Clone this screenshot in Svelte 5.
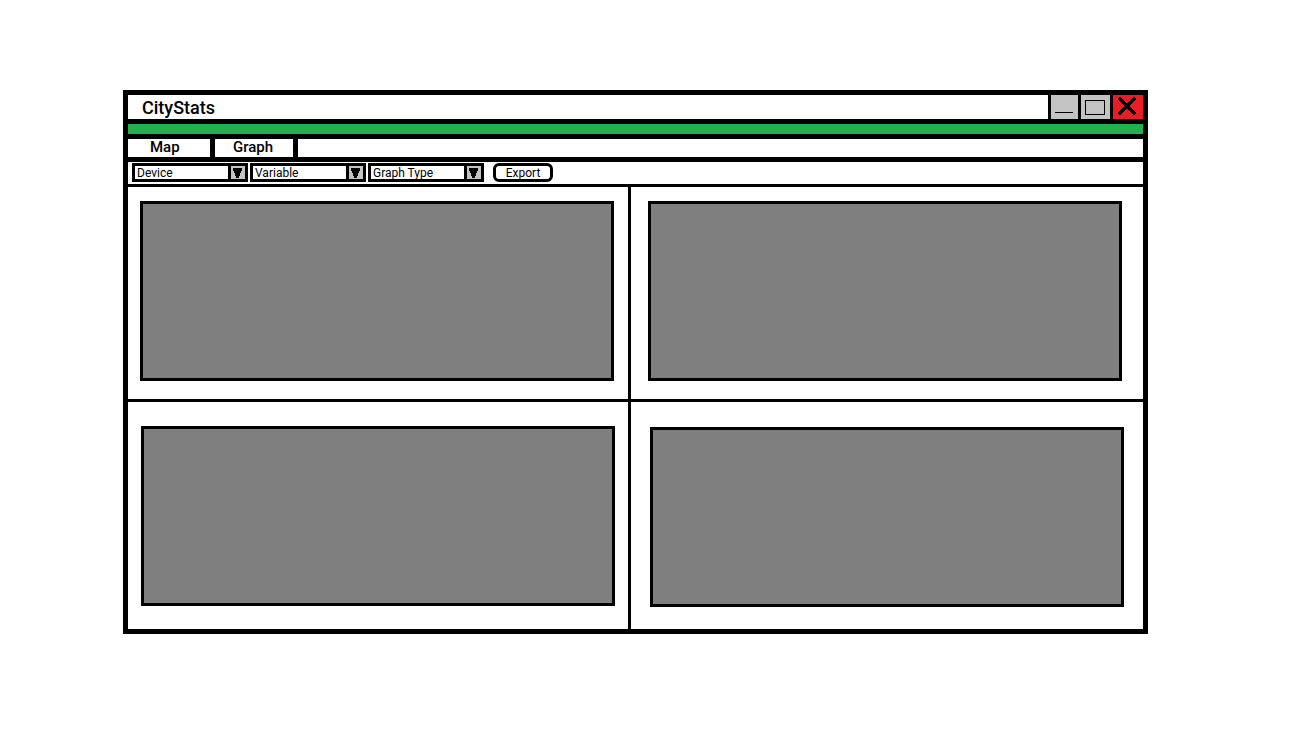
<script>
  const filters = [
    { id: 'device', label: 'Device' },
    { id: 'variable', label: 'Variable' },
    { id: 'graph-type', label: 'Graph Type' }
  ];
  const charts = ['one', 'two', 'three', 'four'];
  let tab = $state('Graph');
</script>

<div class="page">
  <main class="window">
    <header class="titlebar">
      <h1>CityStats</h1>
      <button class="control minimise" aria-label="Minimise">
        <svg width="18" height="18" viewBox="0 0 18 18" shape-rendering="crispEdges"><path d="M0 14h18v1H0z" /></svg>
      </button>
      <button class="control maximise" aria-label="Maximise">
        <svg width="20" height="15" viewBox="0 0 20 15" shape-rendering="crispEdges"><path d="M0 0h20v15H0zM1 1v13h18V1z" fill-rule="evenodd" /></svg>
      </button>
      <button class="control close" aria-label="Close">
        <svg width="18" height="18" viewBox="0 0 18 18" shape-rendering="crispEdges"><path d="M2 2L16 16M16 2L2 16" stroke="#000" stroke-width="3" stroke-linecap="square" /></svg>
      </button>
    </header>
    <div class="accent"></div>
    <nav class="tabs">
      <button class="tab map" onclick={() => (tab = 'Map')} aria-pressed={tab === 'Map'}>Map</button>
      <button class="tab graph" onclick={() => (tab = 'Graph')} aria-pressed={tab === 'Graph'}>Graph</button>
    </nav>
    <div class="toolbar">
      {#each filters as f (f.id)}
        <div class="combo">
          <select id={f.id} aria-label={f.label}>
            <option>{f.label}</option>
          </select>
          <span class="arrow">
            <svg width="9" height="10" viewBox="0 0 9 10" shape-rendering="crispEdges"><path d="M0 0h9v3H8v2H7v3H6v2H3V8H2V5H1V3H0z" /></svg>
          </span>
        </div>
      {/each}
      <button class="export">Export</button>
    </div>
    <section class="grid">
      {#each charts as c (c)}
        <div class="cell {c}"><div class="chart"></div></div>
      {/each}
    </section>
  </main>
</div>

<style>
  :global(body) {
    margin: 0;
    background: #fff;
  }
  .page {
    box-sizing: border-box;
    min-height: 100vh;
    display: flex;
    padding: 90px 163px 98px 123px;
    font-family: Roboto, sans-serif;
    color: #000;
  }
  .window {
    flex: 1;
    min-width: 0;
    display: flex;
    flex-direction: column;
    border: 5px solid #000;
  }
  button,
  select {
    margin: 0;
    padding: 0;
    border: 0;
    border-radius: 0;
    background: #fff;
    color: #000;
    font-family: inherit;
    font-weight: 400;
  }
  svg {
    display: block;
  }
  .titlebar {
    display: flex;
    height: 24px;
    border-bottom: 5px solid #000;
  }
  h1 {
    flex: 1;
    margin: 0;
    padding-left: 14px;
    font-size: 18px;
    line-height: 25px;
    font-weight: 500;
  }
  .control {
    display: flex;
    align-items: center;
    border-left: 3px solid #000;
    background: #c3c3c3;
  }
  .minimise {
    width: 30px;
    padding-left: 4px;
  }
  .maximise {
    width: 32px;
    padding-left: 4px;
  }
  .close {
    width: 33px;
    padding-left: 5px;
    padding-bottom: 2px;
    background: #ed1c24;
  }
  .accent {
    height: 10px;
    background: #22b14c;
    border-bottom: 5px solid #000;
  }
  .tabs {
    display: flex;
    height: 18px;
    border-bottom: 5px solid #000;
  }
  .tab {
    padding-bottom: 2px;
    border-right: 5px solid #000;
    font-size: 15px;
    line-height: 16px;
    font-weight: 500;
    text-align: left;
  }
  .map {
    width: 87px;
    padding-left: 22px;
  }
  .graph {
    width: 83px;
    padding-left: 18px;
  }
  .toolbar {
    display: flex;
    gap: 2px;
    padding: 1px 4px 2px;
    border-bottom: 3px solid #000;
  }
  .combo {
    display: grid;
    box-sizing: border-box;
    width: 116px;
    height: 19px;
    border: 3px solid #000;
  }
  .combo select {
    grid-area: 1 / 1;
    appearance: none;
    padding: 1px 17px 0 2px;
    font-size: 12px;
    line-height: 12px;
    min-width: 0;
  }
  .arrow {
    grid-area: 1 / 1;
    justify-self: end;
    width: 12px;
    padding: 2px 0 0 2px;
    border-left: 3px solid #000;
    background: #c3c3c3;
    pointer-events: none;
  }
  .export {
    box-sizing: border-box;
    width: 60px;
    height: 19px;
    margin-left: 7px;
    padding-top: 1px;
    border: 3px solid #000;
    border-radius: 6px;
    font-size: 12px;
    line-height: 12px;
  }
  .grid {
    flex: 1;
    display: grid;
    grid-template-columns: 503fr 512fr;
    grid-template-rows: 215fr 227fr;
  }
  .cell {
    display: flex;
    min-height: 120px;
    box-sizing: border-box;
  }
  .chart {
    flex: 1;
    border: 3px solid #000;
    background: #7f7f7f;
  }
  .one {
    padding: 14px 14px 18px 12px;
  }
  .two {
    padding: 14px 21px 18px 17px;
  }
  .three {
    padding: 24px 13px 23px 13px;
  }
  .four {
    padding: 25px 19px 22px 19px;
  }
  .one,
  .three {
    border-right: 3px solid #000;
  }
  .one,
  .two {
    border-bottom: 3px solid #000;
  }
</style>
